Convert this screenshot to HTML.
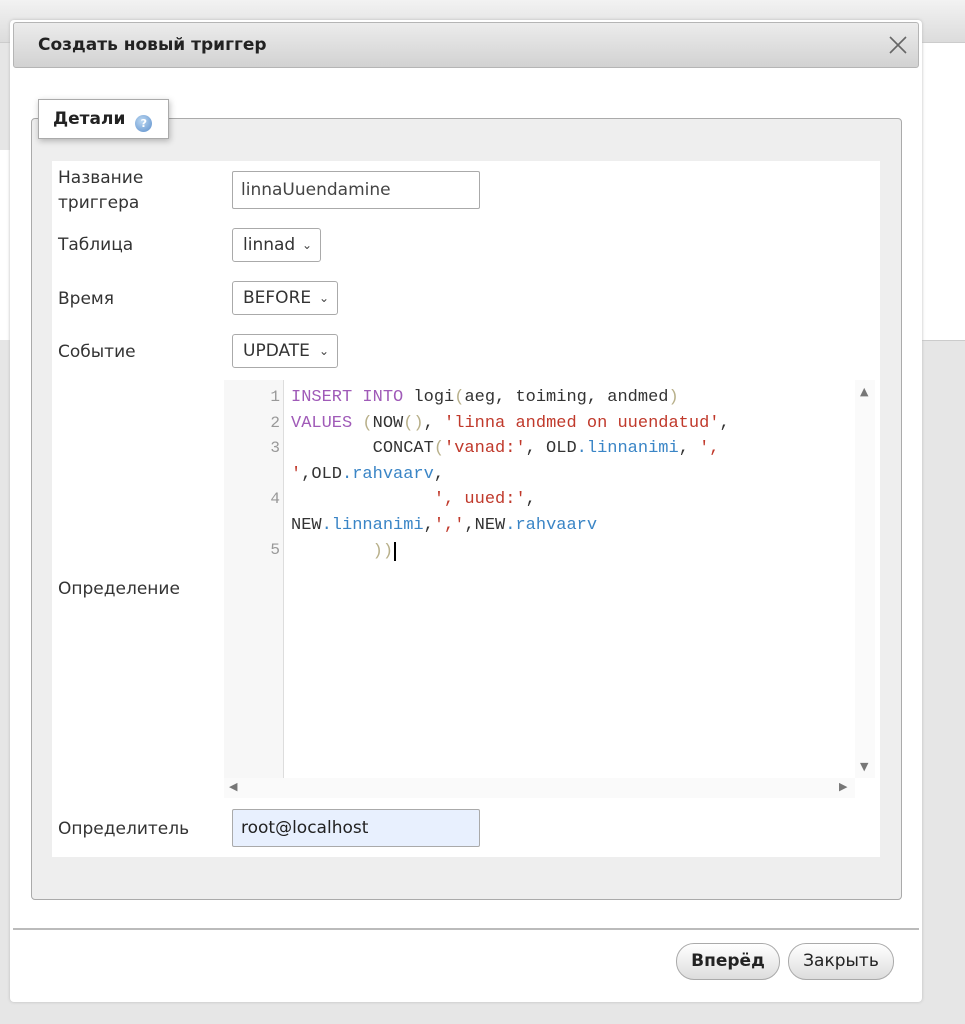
<!DOCTYPE html>
<html><head><meta charset="utf-8"><style>
*{box-sizing:border-box;margin:0;padding:0}
body{width:965px;height:1024px;background:#e6e6e6;position:relative;overflow:hidden;font-family:"DejaVu Sans","Liberation Sans",sans-serif;color:#333}
.abs{position:absolute}
.topbar{left:0;top:0;width:965px;height:43px;background:linear-gradient(#f2f2f2,#dcdcdc);border-bottom:1px solid #ccc}
.page{left:920px;top:43px;width:45px;height:298px;background:#fff;border-bottom:1px solid #ccc}
.leftpg{left:0;top:150px;width:10px;height:190px;background:#fff}
.dlg{left:10px;top:20px;width:912px;height:982px;background:#fff;border-radius:4px;box-shadow:0 0 3px #bbb}
.title{left:13px;top:22px;width:906px;height:46px;background:linear-gradient(#ececec,#d2d2d2);border:1px solid #b5b5b5;border-radius:3px;font-weight:bold;font-size:17px;line-height:44px;padding-left:24px;color:#222}
.fs{left:31px;top:118px;width:871px;height:782px;background:#eee;border:1px solid #aaa;border-radius:4px}
.legend{left:38px;top:99px;width:131px;height:40px;background:#fff;border:1px solid #aaa;box-shadow:1px 2px 6px rgba(0,0,0,.25);font-weight:bold;font-size:17px;line-height:38px;padding-left:14px;color:#222}
.help{display:inline-block;width:17px;height:17px;border-radius:50%;background:radial-gradient(circle at 40% 35%,#bcd8f2,#5b8ecb);vertical-align:-3px;margin-left:10px;color:#fff;font-size:11px;line-height:17px;text-align:center}
.tbl{left:52px;top:161px;width:828px;height:696px;background:#fff}
.lbl{font-size:17px;color:#333;line-height:25px}
.inp{border:1px solid #aaa;border-radius:2px;background:#fff;font-size:17px;line-height:36px;padding-left:8px;color:#444}
.sel{border:1px solid #aaa;border-radius:3px;background:#fff;font-size:17px;line-height:32px;padding-left:10px;color:#333}
.sel i{font-style:normal;font-size:12px;position:absolute;right:8px;top:0;color:#444}
.ed{left:224px;top:380px;width:651px;height:418px;background:#fff}
.gut{left:0;top:0;width:60px;height:398px;background:#f7f7f7;border-right:1px solid #ddd}
.code{left:67px;top:5px;font-family:"Liberation Mono",monospace;font-size:17px;line-height:25.6px;color:#333;white-space:pre}
.ln{left:0;width:56px;text-align:right;font-family:"Liberation Mono",monospace;font-size:16px;color:#999}
.k{color:#a05bb8}.s{color:#c0392b}.v{color:#3a85c6}.p{color:#b8b08a}
.btn{top:943px;height:37px;border:1px solid #aaa;border-radius:18px;background:linear-gradient(#fff,#ddd);font-size:17px;line-height:35px;text-align:center;color:#222}
</style></head><body>
<div class="abs topbar"></div>
<div class="abs page"></div>
<div class="abs leftpg"></div>
<div class="abs dlg"></div>
<div class="abs title">Создать новый триггер<svg style="position:absolute;right:11px;top:13px" width="18" height="18"><path d="M1 1L17 17M17 1L1 17" stroke="#666" stroke-width="1.6"/></svg></div>
<div class="abs fs"></div>
<div class="abs legend">Детали<span class="help">?</span></div>
<div class="abs tbl"></div>
<div class="abs lbl" style="left:58px;top:166px">Название<br>триггера</div>
<div class="abs inp" style="left:232px;top:171px;width:248px;height:38px">linnaUuendamine</div>
<div class="abs lbl" style="left:58px;top:233px">Таблица</div>
<div class="abs sel" style="left:232px;top:228px;width:89px;height:34px">linnad<i>⌄</i></div>
<div class="abs lbl" style="left:58px;top:287px">Время</div>
<div class="abs sel" style="left:232px;top:281px;width:106px;height:34px">BEFORE<i>⌄</i></div>
<div class="abs lbl" style="left:58px;top:340px">Событие</div>
<div class="abs sel" style="left:232px;top:334px;width:106px;height:34px">UPDATE<i>⌄</i></div>
<div class="abs lbl" style="left:58px;top:577px">Определение</div>
<div class="abs ed">
<div class="abs gut"></div>
<div class="abs ln" style="top:8px">1</div>
<div class="abs ln" style="top:33.6px">2</div>
<div class="abs ln" style="top:59px">3</div>
<div class="abs ln" style="top:110px">4</div>
<div class="abs ln" style="top:161px">5</div>
<div class="abs" style="left:631px;top:0;width:20px;height:398px;background:#fafafa"></div>
<div class="abs" style="left:636px;top:5px;color:#777;font-size:11px">▲</div>
<div class="abs" style="left:636px;top:380px;color:#777;font-size:11px">▼</div>
<div class="abs" style="left:0;top:398px;width:631px;height:20px;background:#fafafa"></div>
<div class="abs" style="left:5px;top:400px;color:#777;font-size:11px">◀</div>
<div class="abs" style="left:615px;top:400px;color:#777;font-size:11px">▶</div>
<div class="code abs"><span class="k">INSERT INTO</span> logi<span class="p">(</span>aeg, toiming, andmed<span class="p">)</span>
<span class="k">VALUES</span> <span class="p">(</span>NOW<span class="p">()</span>, <span class="s">'linna andmed on uuendatud'</span>,
        CONCAT<span class="p">(</span><span class="s">'vanad:'</span>, OLD<span class="v">.linnanimi</span>, <span class="s">',</span>
<span class="s">'</span>,OLD<span class="v">.rahvaarv</span>,
              <span class="s">', uued:'</span>,
NEW<span class="v">.linnanimi</span>,<span class="s">','</span>,NEW<span class="v">.rahvaarv</span>
        <span class="p">))</span><span style="border-left:2px solid #000;margin-left:1px"></span></div>
</div>
<div class="abs lbl" style="left:58px;top:817px">Определитель</div>
<div class="abs inp" style="left:232px;top:809px;width:248px;height:38px;background:#e8f0fe;color:#222">root@localhost</div>
<div class="abs" style="left:13px;top:928px;width:906px;height:2px;background:#bbb"></div>
<div class="abs btn" style="left:676px;width:104px;font-weight:bold">Вперёд</div>
<div class="abs btn" style="left:788px;width:106px">Закрыть</div>
</body></html>
